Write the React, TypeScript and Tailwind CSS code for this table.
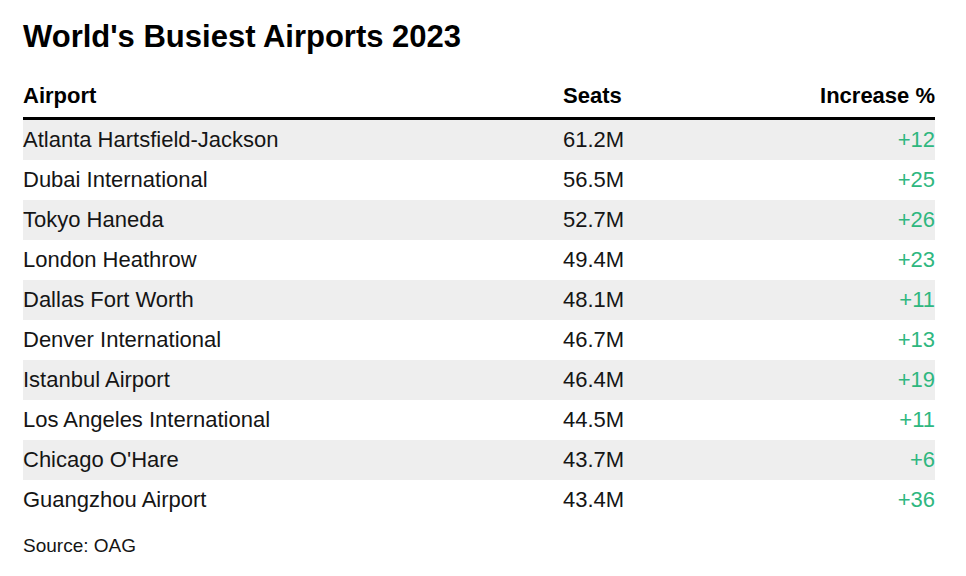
import React from "react";

const rows = [
  { name: "Atlanta Hartsfield-Jackson", seats: "61.2M", inc: "+12" },
  { name: "Dubai International", seats: "56.5M", inc: "+25" },
  { name: "Tokyo Haneda", seats: "52.7M", inc: "+26" },
  { name: "London Heathrow", seats: "49.4M", inc: "+23" },
  { name: "Dallas Fort Worth", seats: "48.1M", inc: "+11" },
  { name: "Denver International", seats: "46.7M", inc: "+13" },
  { name: "Istanbul Airport", seats: "46.4M", inc: "+19" },
  { name: "Los Angeles International", seats: "44.5M", inc: "+11" },
  { name: "Chicago O'Hare", seats: "43.7M", inc: "+6" },
  { name: "Guangzhou Airport", seats: "43.4M", inc: "+36" },
];

export default function App() {
  return (
    <div
      className="w-[966px] h-[576px] bg-white px-[23px] pt-[19px] text-[#151515]"
      style={{ fontFamily: '"Liberation Sans", Arial, sans-serif' }}
    >
      <h1 className="text-[31px] leading-[36px] font-bold text-black">
        World's Busiest Airports 2023
      </h1>
      <div className="w-[912px] mt-[22px]">
        <div className="grid grid-cols-[540px_1fr_auto] items-center h-[43px] pb-[3px] border-b-[3px] border-black text-[22px] font-bold text-black">
          <div>Airport</div>
          <div>Seats</div>
          <div className="text-right">Increase %</div>
        </div>
        {rows.map((r, i) => (
          <div
            key={r.name}
            className={`grid grid-cols-[540px_1fr_auto] items-center h-[40px] pb-[1px] text-[22px] ${
              i % 2 === 0 ? "bg-[#eeeeee]" : "bg-white"
            }`}
          >
            <div>{r.name}</div>
            <div>{r.seats}</div>
            <div className="text-right text-[#2fb77f]">{r.inc}</div>
          </div>
        ))}
      </div>
      <p className="mt-[13px] text-[19px] leading-[26px]">Source: OAG</p>
    </div>
  );
}
